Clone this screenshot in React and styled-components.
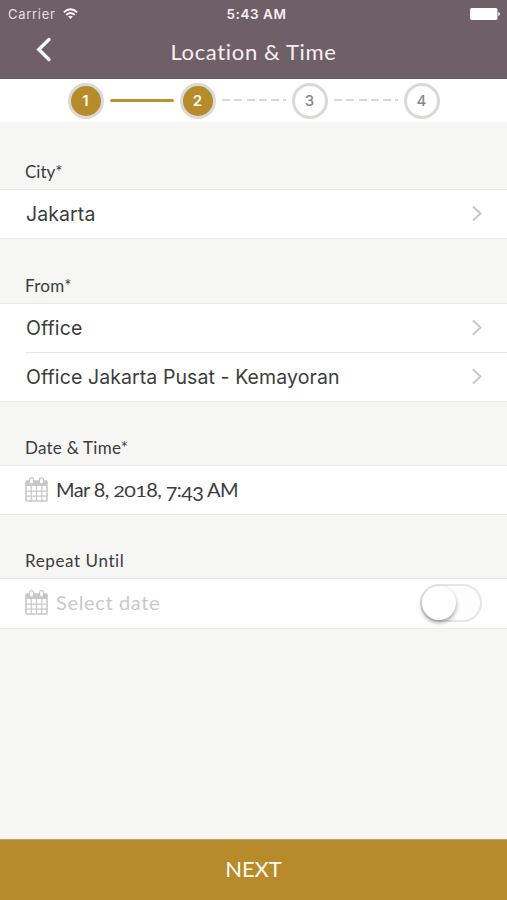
import React from "react";
import styled, { createGlobalStyle } from "styled-components";

const Global = createGlobalStyle`
  * { box-sizing: border-box; }
  body { margin: 0; background: #f6f6f5; }
`;

const ui = `Inter, "Liberation Sans", sans-serif`;
const brand = `Lato, "Open Sans", sans-serif`;

const Screen = styled.div`
  width: 507px;
  height: 900px;
  display: flex;
  flex-direction: column;
  overflow: hidden;
  background: #f6f6f5;
  color: #3c3c3c;
  font-family: ${brand};
`;

const Header = styled.header`
  height: 79px;
  flex: none;
  background: #6f6067;
  color: #f8eff3;
  border-bottom: 1px solid #67585f;
`;

const StatusBar = styled.div`
  height: 27px;
  display: grid;
  grid-template-columns: 1fr auto 1fr;
  align-items: center;
  padding: 0 7px 0 8px;
  font-family: ${ui};
  font-size: 13px;
`;

const Carrier = styled.div`
  display: flex;
  align-items: center;
  gap: 7px;
  letter-spacing: 0.7px;
  color: #e9dfe4;
`;

const Clock = styled.div`
  font-weight: 600;
  font-size: 13.5px;
  letter-spacing: 0.55px;
  padding-left: 5px;
`;

const BatterySlot = styled.div`
  display: flex;
  justify-content: flex-end;
`;

const TitleBar = styled.div`
  height: 50px;
  display: grid;
  grid-template-columns: 88px 1fr 88px;
  align-items: center;
`;

const BackButton = styled.button`
  height: 50px;
  padding: 0 0 6px 36px;
  border: 0;
  background: none;
  display: flex;
  align-items: center;
`;

const Title = styled.h1`
  margin: 0;
  text-align: center;
  font-size: 22px;
  line-height: 50px;
  font-weight: 400;
  letter-spacing: 0.65px;
  white-space: nowrap;
`;

const Stepper = styled.div`
  height: 43px;
  flex: none;
  display: flex;
  align-items: center;
  justify-content: center;
  background: #fff;
`;

const Step = styled.div`
  width: 36px;
  height: 36px;
  border-radius: 50%;
  border: 3px solid #dad9d8;
  display: flex;
  align-items: center;
  justify-content: center;
  font-family: ${ui};
  font-size: 15px;
  font-weight: ${(p) => (p.$done ? 600 : 500)};
  color: ${(p) => (p.$done ? "#fffaf0" : "#888")};
  background: ${(p) => (p.$done ? "#b88b2a" : "#fff")};
`;

const Connector = styled.div`
  width: 64px;
  height: ${(p) => (p.$done ? "3px" : "2px")};
  margin: 0 6px;
  margin-bottom: ${(p) => (p.$done ? "0" : "2px")};
  border-radius: ${(p) => (p.$done ? "2px" : "0")};
  background: ${(p) =>
    p.$done ? "#bd9034" : "repeating-linear-gradient(90deg, #d8d8d8 0 8px, transparent 8px 12.3px)"};
`;

const Label = styled.div`
  height: ${(p) => p.$height}px;
  flex: none;
  display: flex;
  align-items: flex-end;
  padding: 0 25px 7px;
  font-size: 17px;
  line-height: 20px;
  letter-spacing: ${(p) => p.$spacing || 0}px;
`;

const Group = styled.div`
  flex: none;
  background: #fff;
  border-top: 1px solid #e9e9e8;
  border-bottom: 1px solid #e9e9e8;
  padding-left: 25px;
`;

const Row = styled.div`
  height: ${(p) => p.$height || 48}px;
  display: flex;
  align-items: center;
  padding: 0 24px 1px 0;

  & + & {
    border-top: 1px solid #e7e7e7;
  }
`;

const Value = styled.span`
  flex: 1;
  padding: 1px 0 0 1px;
  font-family: ${ui};
  font-size: 19.5px;
  letter-spacing: 0.09px;
  white-space: nowrap;
`;

const DateValue = styled.span`
  flex: 1;
  margin-left: 8px;
  padding-bottom: 2px;
  font-size: 20px;
  line-height: 24px;
  letter-spacing: ${(p) => p.$spacing || 0}px;
  color: ${(p) => (p.$empty ? "#c9c9cb" : "#3c3c3c")};
  white-space: nowrap;
`;

const ShortDigits = styled.span`
  display: inline-block;
  line-height: 20px;
  transform: scaleY(0.77);
  transform-origin: 50% 84%;
`;

const LowDigits = styled.span`
  display: inline-block;
  line-height: 20px;
  transform: translateY(4px);
`;

const Switch = styled.div`
  width: 62px;
  height: 38px;
  margin-right: 1px;
  border-radius: 19px;
  border: 2px solid #e6e6e6;
  background: #fdfdfd;
`;

const Knob = styled.div`
  width: 34px;
  height: 34px;
  border-radius: 50%;
  background: #fff;
  box-shadow: 0 3px 4px rgba(0, 0, 0, 0.28), 0 1px 5px rgba(0, 0, 0, 0.1);
`;

const NextButton = styled.button`
  height: 61px;
  flex: none;
  margin-top: auto;
  padding: 0 0 3px;
  border: 0;
  border-top: 1px solid #c8a762;
  background: #b78b2b;
  color: #fffaf0;
  font-family: ${brand};
  font-size: 22px;
  letter-spacing: -0.05px;
`;

const Wifi = () => (
  <svg width="15" height="12" viewBox="0 0 15 12" fill="none" stroke="#fff" strokeWidth="1.8">
    <path d="M.8 4.3Q7.5-1.8 14.2 4.3M3.2 6.9Q7.5 3.1 11.8 6.9" />
    <path d="M5.1 8.6Q7.5 6.7 9.9 8.6L7.5 11.1Z" fill="#fff" stroke="none" />
  </svg>
);

const Battery = () => (
  <svg width="30" height="12" viewBox="0 0 30 12" fill="#fff">
    <rect width="27.5" height="12" rx="1.8" />
    <path d="M28.3 4Q30 4.5 30 6T28.3 8Z" />
  </svg>
);

const Chevron = () => (
  <svg width="11" height="17" viewBox="0 0 11 17" fill="none" stroke="#c7c7c9" strokeWidth="2">
    <path d="M1 1.5 8.5 8.5 1 15.5" />
  </svg>
);

const Calendar = () => (
  <svg width="23" height="26" viewBox="0 0 23 26" fill="none" stroke="#c8c8ca">
    <path d="M1 4H22V9H1Z" fill="#c8c8ca" stroke="none" />
    <rect x="1" y="4" width="21" height="20" rx="1" strokeWidth="1.6" />
    <path d="M6.2 9V24M11.5 9V24M16.8 9V24M1 14.1H22M1 19.1H22" strokeWidth="1.2" />
    <rect x="4.5" y=".6" width="4" height="6.5" rx="2" fill="#fff" strokeWidth="1.2" />
    <rect x="14.5" y=".6" width="4" height="6.5" rx="2" fill="#fff" strokeWidth="1.2" />
  </svg>
);

export default function App() {
  return (
    <Screen>
      <Global />
      <Header>
        <StatusBar>
          <Carrier>Carrier <Wifi /></Carrier>
          <Clock>5:43 AM</Clock>
          <BatterySlot><Battery /></BatterySlot>
        </StatusBar>
        <TitleBar>
          <BackButton aria-label="Back">
            <svg width="16" height="25" viewBox="0 0 16 25" fill="none" stroke="#fff" strokeWidth="3.4" strokeLinecap="round">
              <path d="M13 2.5 2.8 12.5 13 22.5" />
            </svg>
          </BackButton>
          <Title>Location &amp; Time</Title>
        </TitleBar>
      </Header>
      <Stepper>
        <Step $done>1</Step>
        <Connector $done />
        <Step $done>2</Step>
        <Connector />
        <Step>3</Step>
        <Connector />
        <Step>4</Step>
      </Stepper>
      <Label $height={67}>City*</Label>
      <Group>
        <Row>
          <Value>Jakarta</Value>
          <Chevron />
        </Row>
      </Group>
      <Label $height={64} $spacing={0.3}>From*</Label>
      <Group>
        <Row>
          <Value>Office</Value>
          <Chevron />
        </Row>
        <Row $height={49}>
          <Value>Office Jakarta Pusat - Kemayoran</Value>
          <Chevron />
        </Row>
      </Group>
      <Label $height={63} $spacing={0.25}>Date &amp; Time*</Label>
      <Group>
        <Row>
          <Calendar />
          <DateValue $spacing={-0.6}>
            Mar 8, <ShortDigits>201</ShortDigits>8, <LowDigits>7</LowDigits>:<LowDigits>43</LowDigits> AM
          </DateValue>
        </Row>
      </Group>
      <Label $height={63} $spacing={0.6}>Repeat Until</Label>
      <Group>
        <Row $height={49}>
          <Calendar />
          <DateValue $empty $spacing={0.65}>Select date</DateValue>
          <Switch role="switch" aria-checked="false"><Knob /></Switch>
        </Row>
      </Group>
      <NextButton>NEXT</NextButton>
    </Screen>
  );
}
